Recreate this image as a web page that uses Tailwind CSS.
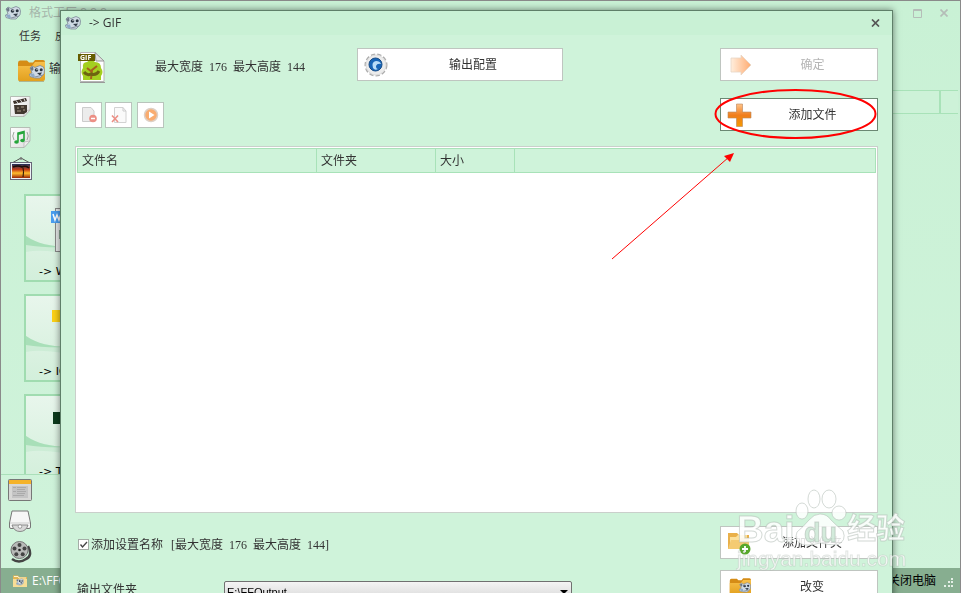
<!DOCTYPE html>
<html lang="zh-CN">
<head>
    <meta charset="UTF-8">
    <meta name="viewport" content="width=device-width, initial-scale=1.0">
    <title>格式工厂 - GIF</title>
    <script src="https://cdn.jsdelivr.net/npm/@tailwindcss/browser@4"></script>
</head>
<body class="font-['Liberation_Sans','Noto_Sans_CJK_SC',sans-serif] text-xs text-[#333]">

    <!-- 公用图标 -->
    <svg class="absolute h-0 w-0" aria-hidden="true">
        <symbol id="logo" viewBox="0 0 16 14">
            <path d="M1 3 L3 1 L6 2.500 L11 0.500 L14.500 2 L15.500 5 L15 9 L11 13 L6 13 L1 11.500 L0.500 9 L3 8 L2 5 Z" fill="#cfdae4" stroke="#7d8a98" stroke-width=".8"/>
            <path d="M1 3 L4 1.500 L4.500 4.500 L3 6 Z" fill="#6d7986"/>
            <circle cx="7.500" cy="5" r="1.800" fill="#2b3542"/>
            <circle cx="12.200" cy="4.800" r="1.500" fill="#2b3542"/>
            <circle cx="8" cy="4.600" r=".6" fill="#fff"/>
            <path d="M8 8 L13 7.500 L11 10.500 Z" fill="#303a46"/>
            <path d="M1 9 L5 8.500 L6 12 L3 12 Z" fill="#8fabc8"/>
            <path d="M6 12 L14 10" stroke="#8793a0" stroke-width="1.200"/>
        </symbol>
        <symbol id="folder" viewBox="0 0 28 24">
            <path d="M1 4 Q1 1.500 3 1.500 H10 L12 3.500 H16 L18 1 H26 Q28 1 28 3 V20 H1 Z" fill="#d58c16"/>
            <path d="M1 7 H15 L18 3 H28 V20 Q28 22 26 22 H2 Q1 22 1 20 Z" fill="url(#gold)"/>
            <path d="M2 22.500 H27" stroke="#8d7a50" stroke-opacity=".5"/>
        </symbol>
        <symbol id="folder-pale" viewBox="0 0 16 14">
            <path d="M1 1.500 H6 L7.500 3 H15 V13 H1 Z" fill="#e2b552"/>
            <path d="M1 5 H15 V13 H1 Z" fill="#f7dd96"/>
            <path d="M2 2.500 H6 L7 4 H14" stroke="#fdf3cf" fill="none"/>
        </symbol>
        <linearGradient id="gold" x1="0" y1="0" x2="0" y2="1"><stop offset="0" stop-color="#f8c04a"/><stop offset="1" stop-color="#e2a01e"/></linearGradient>
        <linearGradient id="page" x1="0" y1="0" x2="1" y2="1"><stop offset="0" stop-color="#fff"/><stop offset="1" stop-color="#dcdcdc"/></linearGradient>
        <linearGradient id="sunset" x1="0" y1="0" x2="0" y2="1"><stop offset="0" stop-color="#1d2f5c"/><stop offset=".4" stop-color="#c33b15"/><stop offset=".65" stop-color="#ffbe2e"/><stop offset="1" stop-color="#9a2508"/></linearGradient>
        <linearGradient id="plus" x1="0" y1="0" x2="0" y2="1"><stop offset="0" stop-color="#ffc48a"/><stop offset=".5" stop-color="#f07d1c"/><stop offset="1" stop-color="#f49a00"/></linearGradient>
        <linearGradient id="arrow" x1="0" y1="0" x2="1" y2="0"><stop offset="0" stop-color="#ffeedd"/><stop offset="1" stop-color="#ffac72"/></linearGradient>
        <symbol id="hill" viewBox="0 0 60 84">
            <path d="M0 40 Q20 54 60 50 V62 Q20 52 0 56 Z" fill="#c3e9ce" opacity=".6"/>
            <path d="M0 40 Q20 54 60 50 Q25 53 0 49 Z" fill="#a8dfb8"/>
        </symbol>
    </svg>

    <!-- 主窗口 -->
    <div class="relative flex h-screen flex-col overflow-hidden border-x border-t border-[#8a8a8a] bg-linear-to-b from-[#c9f1d5] to-[#d0f3db]">
        <header class="flex h-6 shrink-0 items-center pl-1">
            <svg class="h-[14px] w-4"><use href="#logo"/></svg>
            <span class="ml-2 flex-1 text-[#a5b5aa]">格式工厂 3.3.3</span>
            <button aria-label="最大化" class="mr-[18px] text-[#b5bdb8]"><svg width="9" height="9"><path d="M.5 .5 H8.500 V8.500 H.5 Z M0 1.500 H9" fill="none" stroke="currentColor"/></svg></button>
            <button aria-label="关闭" class="mr-3 text-[#b5bdb8]"><svg width="8" height="8"><path d="M0.500 0.500 L7.500 7.500 M7.500 0.500 L0.500 7.500" stroke="currentColor" stroke-width="1.700"/></svg></button>
        </header>
        <nav class="flex h-[22px] shrink-0 items-center gap-[14px] pl-[18px] text-[11px]">
            <a href="#">任务</a>
            <a href="#">皮肤</a>
        </nav>
        <div class="flex h-[43px] shrink-0 items-center gap-1 pl-4 pt-1">
            <span class="relative">
                <svg class="h-6 w-7"><use href="#folder"/></svg>
                <svg class="absolute bottom-1 right-0 h-[14px] w-4"><use href="#logo"/></svg>
            </span>
            <span class="-mt-1">输出文件夹</span>
        </div>

        <main class="flex min-h-0 flex-1">
            <aside class="flex w-40 flex-col">
                <div class="flex flex-col gap-[10px] pl-[9px] pt-[6px]">
                    <svg width="21" height="21"><path d="M.5 .5 H20 V14 L14 20.500 H.5 Z" fill="url(#page)" stroke="#b5bdb5"/><path d="M20 14 L14 15 V20.500 Z" fill="#eee" stroke="#aaa" stroke-width=".6"/><path d="M3 5 L16 2 L17 5 L4 8 Z" fill="#3b3029"/><path d="M6 4.500 L8 7 M10 3.500 L12 6 M14 2.700 L15 5" stroke="#ddd"/><path d="M4 9 H17 V16 L14 18 H5 Z" fill="#41372f"/><path d="M7 12 h2 M11 11 h3 M7 15 h4 M13 14 h2" stroke="#a99a88"/></svg>
                    <svg width="21" height="21"><path d="M.5 .5 H20 V14 L14 20.500 H.5 Z" fill="url(#page)" stroke="#b5bdb5"/><path d="M20 14 L14 15 V20.500 Z" fill="#eee" stroke="#aaa" stroke-width=".6"/><path d="M8 14.500 V6 L14 4.500 V13" fill="none" stroke="#25a53a" stroke-width="1.600"/><path d="M8 7 L14 5.500" stroke="#25a53a" stroke-width="2"/><ellipse cx="6.500" cy="15" rx="2.300" ry="1.800" fill="#25a53a"/><ellipse cx="12.500" cy="13.500" rx="2.300" ry="1.800" fill="#25a53a"/><path d="M4 5 Q1.500 9 4 13 M17 5 Q19.500 9 17 13" fill="none" stroke="#9fa8a0"/></svg>
                    <svg width="22" height="23" class="-mt-px"><path d="M2 6 L11 1 L20 6" fill="none" stroke="#555"/><circle cx="11" cy="1.500" r="1.300" fill="#777"/><rect x=".5" y="5.500" width="21" height="17" fill="#eef2f6" stroke="#667"/><rect x="2" y="7" width="18" height="14" fill="url(#sunset)"/><path d="M3 10 Q8 8 12 10 Q16 8 19 11" stroke="#1b0d08" stroke-width="1.500" fill="none"/><path d="M13 20 Q14 14 13 11" stroke="#1b0d08" fill="none"/></svg>
                </div>
                <div class="mt-3 flex min-h-0 flex-1 flex-col gap-3 overflow-hidden border-b border-[#aadfb9] pl-[23px] pt-[2px]">
                    <button class="relative h-[88px] w-24 shrink-0 border-2 border-[#a0dcb0] bg-linear-to-b from-[#e8f6ec] to-[#d3efdb] text-left text-black">
                        <svg class="absolute inset-0 h-[84px] w-[60px]"><use href="#hill"/></svg>
                        <svg class="absolute left-[25px] top-3" width="40" height="44"><rect x="4.500" y=".5" width="30" height="43" fill="#e6eae8" stroke="#888"/><rect y="3" width="16" height="12" fill="#4a9ef0"/><path d="M2 6 L4 12 L6 7 L8 12 L10 6" fill="none" stroke="#fff" stroke-width="1.500"/><path d="M8 22 h18 v9 h-18z" fill="#8aa894"/></svg>
                        <span class="absolute bottom-0 left-[13px] font-['DejaVu_Sans',sans-serif] text-[11px]">-&gt; WebP</span>
                    </button>
                    <button class="relative h-[88px] w-24 shrink-0 border-2 border-[#a0dcb0] bg-linear-to-b from-[#e8f6ec] to-[#d3efdb] text-left text-black">
                        <svg class="absolute inset-0 h-[84px] w-[60px]"><use href="#hill"/></svg>
                        <span class="absolute left-[26px] top-[14px] h-3 w-6 bg-[#fcd116]"></span>
                        <span class="absolute bottom-0 left-[13px] font-['DejaVu_Sans',sans-serif] text-[11px]">-&gt; ICO</span>
                    </button>
                    <button class="relative h-[88px] w-24 shrink-0 border-2 border-[#a0dcb0] bg-linear-to-b from-[#e8f6ec] to-[#d3efdb] text-left text-black">
                        <svg class="absolute inset-0 h-[84px] w-[60px]"><use href="#hill"/></svg>
                        <span class="absolute left-[27px] top-4 h-3 w-6 bg-[#0c3a1c]"></span>
                        <span class="absolute bottom-0 left-[13px] font-['DejaVu_Sans',sans-serif] text-[11px]">-&gt; TIF</span>
                    </button>
                </div>
                <div class="flex shrink-0 flex-col gap-[9px] pb-[5px] pt-1 pl-[7px]">
                    <svg width="24" height="22"><rect x=".5" y=".5" width="23" height="21" rx="1" fill="#d8d8d6" stroke="#777"/><rect x="1" y="1" width="22" height="4" fill="#f5b32a"/><rect x="4" y="7" width="16" height="12" fill="#c4c4c4"/><path d="M5 8.500 h3 M9 8.500 h9 M9 10.500 h8 M5 12.500 h3 M9 12.500 h9 M9 14.500 h8 M5 16.500 h11" stroke="#aaa"/></svg>
                    <svg width="24" height="22"><path d="M4 1 H20 L22.500 13 V17 Q22.500 18.500 21 18.500 H3 Q1.500 18.500 1.500 17 V13 Z" fill="#f6f6f6" stroke="#777"/><path d="M2 13 H22" stroke="#ccc"/><path d="M4 15 H20 Q18 21.500 12 21.500 Q6 21.500 4 15Z" fill="#d8d8d8" stroke="#888"/><circle cx="12" cy="16.500" r="1.800" fill="#fff" stroke="#999"/></svg>
                    <svg width="24" height="22"><path d="M20 5 Q25 15 18 18 Q11 23 4 18" fill="none" stroke="#444" stroke-width="2.500"/><circle cx="11.500" cy="9" r="8.500" fill="#b8bab8" stroke="#777"/><circle cx="11.500" cy="9" r="1.300" fill="#222"/><g fill="#444"><circle cx="11.500" cy="4" r="2"/><circle cx="16.500" cy="7.500" r="2"/><circle cx="14.700" cy="13.300" r="2"/><circle cx="8.300" cy="13.300" r="2"/><circle cx="6.500" cy="7.500" r="2"/></g></svg>
                </div>
            </aside>
            <section class="flex-1 pr-[2px]">
                <div class="flex h-6 justify-end border-y border-[#a8e2b8] bg-[#cdf2d8]"><span class="w-[19px] border-l-2 border-[#a8e2b8]"></span></div>
            </section>
        </main>

        <footer class="flex h-[25px] shrink-0 items-center bg-[#87ae90] pl-[11px] pr-[7px]">
            <span class="relative mr-1"><svg class="h-[14px] w-4"><use href="#folder-pale"/></svg><svg class="absolute right-1 top-1 h-2 w-2"><use href="#logo"/></svg></span>
            <span class="flex-1 font-['Open_Sans',sans-serif] text-white">E:\FFOutput</span>
            <button class="mr-2 text-black">关闭电脑</button>
            <svg class="mt-1" width="9" height="9" fill="#e4efe6"><path d="M7 0h2v2h-2z M4 3h2v2h-2z M7 3h2v2h-2z M0 7h2v2h-2z M4 7h2v2h-2z M7 7h2v2h-2z"/></svg>
        </footer>
    </div>

    <!-- GIF 转换对话框 -->
    <div class="pointer-events-none fixed inset-0 overflow-hidden">
    <div role="dialog" aria-label="GIF" class="pointer-events-auto absolute left-[60px] right-[68px] top-[10px] h-[640px] border border-[#5f7f69] bg-[#cff3da] shadow-[0_0_7px_rgba(0,0,0,0.5)]">
        <div class="flex h-6 items-center bg-[#c9f1d5] pl-1">
            <svg class="h-[14px] w-4"><use href="#logo"/></svg>
            <h1 class="ml-2 flex-1 font-['Open_Sans',sans-serif]">-&gt; GIF</h1>
            <button aria-label="关闭" class="mr-3 text-[#555]"><svg width="9" height="8"><path d="M1 0.500 L8 7.500 M8 0.500 L1 7.500" stroke="currentColor" stroke-width="1.700"/></svg></button>
        </div>

        <div class="px-[14px] pt-[13px]">
            <div class="flex h-[33px] items-center">
                <svg class="mt-1" width="30" height="33"><path d="M5.500 2.500 H20 L29 11 V31.500 H5.500 Z" fill="#fff" stroke="#b5b5b5"/><path d="M20 2.500 L21 11 L29 11 Z" fill="#e4e4e4" stroke="#999"/><path d="M8 18 Q7 12 12 12 Q16 8 20 12 Q26 12 26 18 Q29 22 26 26 V30 H8 V26 Q5 22 8 18Z" fill="#a4cf20"/><path d="M16 29 L17 20 L22 16 M17 22 L12 18" stroke="#a5601c" stroke-width="2" fill="none"/><path d="M9 22 Q12 26 16 24 Q21 26 24 21" stroke="#6d6410" stroke-width="3" fill="none"/><path d="M5 32.500 H30" stroke="#999"/><rect x="3" y="4" width="17" height="7" fill="#665c00"/><text x="5" y="10" font-size="7" font-weight="bold" fill="#fff" font-family="Open Sans">GIF</text></svg>
                <p class="ml-[50px] mt-1 w-[202px]">最大宽度<span class="mx-1.5 font-['Liberation_Serif',serif]">176</span>最大高度<span class="ml-1.5 font-['Liberation_Serif',serif]">144</span></p>
                <button class="flex h-[33px] w-[206px] items-center border border-[#bfc5c0] bg-white pl-[6px] pr-1">
                    <svg width="24" height="24"><circle cx="12" cy="12" r="10" fill="none" stroke="#aeaeae" stroke-width="3" stroke-dasharray="4 2"/><circle cx="12" cy="12" r="10" fill="#ececec" stroke="#ddd"/><circle cx="11.500" cy="11.500" r="6.500" fill="#1765b8" stroke="#174d87"/><path d="M9 15 Q7 9 12 8 Q16 8 17 11 Q13 10 12 13 Q12 16 14 16 Q11 18 9 15Z" fill="#b8dcf8"/></svg>
                    <span class="flex-1 text-center">输出配置</span>
                </button>
                <button disabled class="ml-auto flex h-[33px] w-[158px] items-center border border-[#bfc5c0] bg-white pl-[7px] pr-1 text-[#b5b5b5]">
                    <svg width="24" height="24"><path d="M3 5 H13 V2 L23 12 L13 22 V19 H3 Z" fill="url(#arrow)" stroke="#e7d5c5" stroke-width=".8"/></svg>
                    <span class="flex-1 text-center">确定</span>
                </button>
            </div>

            <div class="mt-[17px] flex h-[33px] items-center">
                <button disabled aria-label="移除" class="grid h-[26px] w-[27px] place-items-center border border-[#b9c4bc] bg-white"><svg width="16" height="18"><path d="M1.500 1.500 H10 L13 5 V15.500 H1.500 Z" fill="#ececec" stroke="#ccc"/><circle cx="12" cy="12.500" r="3.800" fill="#ec8f85"/><path d="M10 12.500 h4" stroke="#fff" stroke-width="1.500"/></svg></button>
                <button disabled aria-label="清空" class="ml-[3px] grid h-[26px] w-[27px] place-items-center border border-[#b9c4bc] bg-white"><svg width="16" height="18"><path d="M3.500 1.500 H12 L15 5 V16.500 H3.500 Z" fill="#fafafa" stroke="#d2d2d2"/><path d="M12 1.500 V5 H15" fill="none" stroke="#ccc"/><path d="M1 9.500 L7 16 M7 9.500 L1 16" stroke="#ec8f85" stroke-width="1.600"/></svg></button>
                <button disabled aria-label="播放" class="ml-[5px] grid h-[26px] w-[27px] place-items-center border border-[#b9c4bc] bg-white"><svg width="16" height="16"><circle cx="8" cy="8" r="6.500" fill="#f9ac70" stroke="#ddd0c6" stroke-width="1.500"/><path d="M6 4.500 L11.500 8 L6 11.500Z" fill="#fff"/></svg></button>
                <button class="ml-auto flex h-[33px] w-[158px] items-center border border-[#6b8873] bg-white pl-[6px] pr-1">
                    <svg width="25" height="24"><path d="M9.500 1 H15.500 V9 H24 V15 H15.500 V23.500 H9.500 V15 H1 V9 H9.500 Z" fill="url(#plus)" stroke="#b9855b" stroke-opacity=".6"/></svg>
                    <span class="flex-1 text-center">添加文件</span>
                </button>
            </div>

            <div class="mt-[15px] h-[367px] border border-[#cacfcb] bg-white p-px">
                <table class="w-full table-fixed border-collapse">
                    <thead>
                        <tr class="h-6 bg-[#cff3da] text-left">
                            <th class="w-[239px] border border-[#a8e2b8] pl-1 font-normal">文件名</th>
                            <th class="w-[119px] border border-[#a8e2b8] pl-1 font-normal">文件夹</th>
                            <th class="w-[79px] border border-[#a8e2b8] pl-1 font-normal">大小</th>
                            <th class="border border-[#a8e2b8]"></th>
                        </tr>
                    </thead>
                    <tbody></tbody>
                </table>
            </div>

            <div class="mt-[13px] flex h-[33px] items-center">
                <label class="flex items-center gap-[2px] pl-[3px] pt-1">
                    <span class="relative grid h-[11px] w-[11px]">
                        <input type="checkbox" checked class="h-[11px] w-[11px] appearance-none border border-[#a5ada7] bg-white">
                        <svg class="pointer-events-none absolute inset-0" width="11" height="11"><path d="M2.500 5.500 L4.500 8 L9 3" fill="none" stroke="#444" stroke-width="1.300"/></svg>
                    </span>
                    <span>添加设置名称<span class="ml-2 font-['Liberation_Serif',serif]">[</span>最大宽度<span class="mx-1.5 font-['Liberation_Serif',serif]">176</span>最大高度<span class="ml-1.5 font-['Liberation_Serif',serif]">144]</span></span>
                </label>
                <button class="ml-auto flex h-[33px] w-[158px] items-center border border-[#bfc5c0] bg-white pl-[6px] pr-1">
                    <svg width="24" height="24"><path d="M1 2 H10 L12 4 H22 V18 H1 Z" fill="#e9b04a"/><path d="M3 6 H9 L11 4 H20 V17 H3 Z" fill="#fbe09b"/><path d="M1 18 L4 9 H12 L14 7 H22 V18Z" fill="#f4cb72"/><circle cx="18" cy="18" r="5.500" fill="#58a82c"/><path d="M18 15 v6 M15 18 h6" stroke="#fff" stroke-width="1.800"/></svg>
                    <span class="flex-1 text-center">添加文件夹</span>
                </button>
            </div>

            <div class="mt-[11px] flex items-start">
                <label for="outdir" class="w-[149px] pl-[2px] pt-3">输出文件夹</label>
                <span class="relative mt-[11px] w-[348px]">
                    <select id="outdir" class="block h-[22px] w-full appearance-none rounded-xs border border-[#707070] bg-linear-to-b from-[#f4f4f4] to-[#d4d4d4] pl-[2px] text-[11px] text-black">
                        <option>E:\FFOutput</option>
                    </select>
                    <svg class="pointer-events-none absolute right-1 top-[9px]" width="8" height="4"><path d="M0 0 H8 L4 4Z"/></svg>
                </span>
                <button class="ml-auto flex h-[33px] w-[158px] items-center border border-[#bfc5c0] bg-white pl-2 pr-1">
                    <span class="relative">
                        <svg class="h-5 w-[22px]"><use href="#folder"/></svg>
                        <svg class="absolute bottom-1 right-0 h-[11px] w-3"><use href="#logo"/></svg>
                    </span>
                    <span class="flex-1 text-center">改变</span>
                </button>
            </div>
        </div>

        <!-- 红色标注 -->
        <svg class="pointer-events-none absolute right-[15px] top-[77px]" width="268" height="175">
            <ellipse cx="186.500" cy="26" rx="80" ry="24" fill="none" stroke="#f00" stroke-width="2"/>
            <path d="M3 171 L120 69" stroke="#f00"/>
            <path d="M125 65 L121 74 L115 68 Z" fill="#f00"/>
        </svg>
    </div>
    </div>

    <!-- 水印 -->
    <svg class="pointer-events-none fixed bottom-[18px] right-[48px]" width="180" height="92" fill="#fff" fill-opacity=".85" stroke="#aab5ad" stroke-opacity=".5" stroke-width="1" font-family="'Liberation Sans','Noto Sans CJK SC',sans-serif" font-weight="bold">
        <ellipse cx="69" cy="28" rx="6" ry="8"/>
        <ellipse cx="81" cy="16" rx="6" ry="9"/>
        <ellipse cx="96" cy="16" rx="7" ry="9"/>
        <ellipse cx="106" cy="30" rx="7" ry="7"/>
        <path d="M87 31 Q94 31 98 37 Q104 43 110 48 Q114 58 104 62 Q96 62 87 60 Q78 63 71 62 Q60 59 64 49 Q70 44 76 37 Q81 31 87 31 Z"/>
        <text x="4" y="59" font-size="37">Bai</text>
        <text x="71" y="59" font-size="27" fill="#cbe8d5">du</text>
        <text x="114" y="56" font-size="29">经验</text>
        <text x="4" y="83" font-size="21" font-weight="normal" stroke-opacity=".35">jingyan.baidu.com</text>
    </svg>
</body>
</html>
